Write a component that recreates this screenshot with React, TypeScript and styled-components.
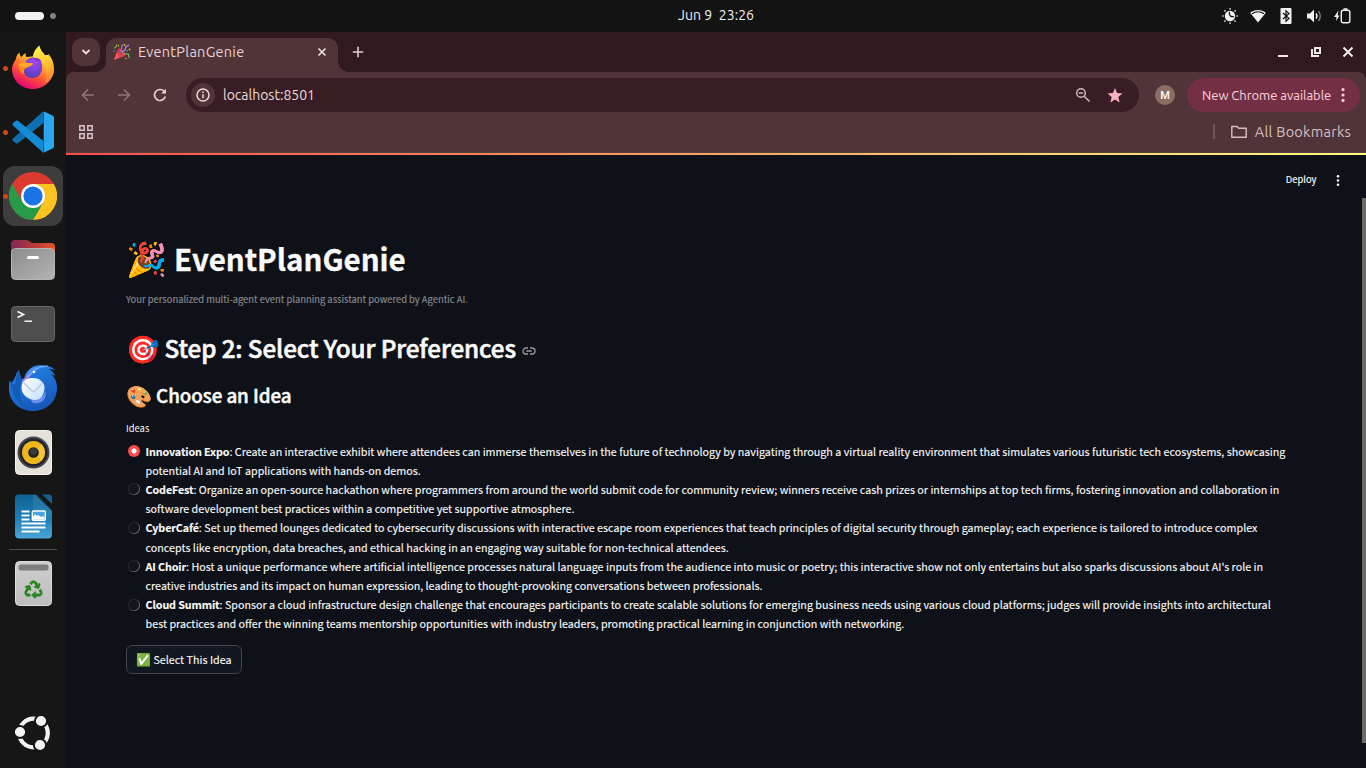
import React from "react";
import styled, { createGlobalStyle } from "styled-components";
import { FaRecycle } from "react-icons/fa";

const Global = createGlobalStyle`
  * { box-sizing: border-box; }
  body { margin: 0; background: #0e1117; overflow: hidden; }
  h1, h2, h3, p { margin: 0; }
  button { font: inherit; color: inherit; border: 0; background: none; padding: 0; }
`;

const uiFont = `"Ubuntu", "Noto Sans", sans-serif`;
const pageFont = `"Source Sans Pro", "Noto Sans CJK SC", "Noto Color Emoji", sans-serif`;

const Desktop = styled.div`
  width: 1366px; height: 768px; overflow: hidden;
  display: flex; flex-direction: column;
  background: #0e1117; font-family: ${uiFont};
`;
const TopBar = styled.header`
  height: 32px; flex: none; background: #131313; color: #f2f2f2;
  display: grid; grid-template-columns: 663px auto 1fr; align-items: center;
  padding: 0 15px 0 15px;
`;
const Workspaces = styled.div`display: flex; align-items: center; gap: 6px;`;
const Pill = styled.span<{ $active?: boolean }>`
  width: ${p => (p.$active ? 29 : 6)}px; height: ${p => (p.$active ? 8 : 6)}px;
  border-radius: 4px; background: ${p => (p.$active ? "#f2f2f2" : "#828282")};
`;
const Clock = styled.div`
  font-size: 14px; white-space: pre; line-height: 30px; height: 32px; letter-spacing: 0.05px;
`;
const Tray = styled.div`display: flex; justify-content: flex-end; align-items: center; gap: 12px;`;

const Body = styled.div`display: flex; flex: 1; min-height: 0;`;
const Dock = styled.nav`
  width: 66px; flex: none; background: #161616; padding: 4px 3px 3px;
  display: flex; flex-direction: column; align-items: stretch;
`;
const Slot = styled.div<{ $active?: boolean }>`
  height: 60px; margin: 2px 0; flex: none; position: relative; border-radius: 12px;
  display: flex; align-items: center; justify-content: center;
  background: ${p => (p.$active ? "#3d3d3d" : "transparent")};
`;
const RunDot = styled.i`
  position: absolute; left: 0; top: 27.5px; width: 5px; height: 5px; border-radius: 50%; background: #d34615;
`;
const DockLine = styled.div`height: 1px; margin: 1px 6px 1px; background: #4c4c4c;`;
const DockSpace = styled.div`flex: 1;`;

const Browser = styled.section`flex: 1; display: flex; flex-direction: column; min-width: 0; background: #30191f;`;
const TabStrip = styled.div`
  height: 40px; flex: none; padding: 6px 0 0 6px; display: flex; color: #e9d6da;
`;
const TabSearch = styled.button`
  width: 28px; height: 28px; border-radius: 10px; background: #503438;
  display: flex; align-items: center; justify-content: center;
`;
const Tab = styled.div`
  position: relative; margin-left: 6px; width: 232px; height: 34px; background: #503438;
  border-radius: 10px 10px 0 0; display: flex; align-items: center; padding: 0 11px 6px 7px;
  &::before, &::after {
    content: ""; position: absolute; bottom: 0; width: 10px; height: 10px;
  }
  &::before { left: -10px; background: radial-gradient(circle at 0 0, transparent 9.5px, #503438 10px); }
  &::after { right: -10px; background: radial-gradient(circle at 100% 0, transparent 9.5px, #503438 10px); }
`;
const TabTitle = styled.span`
  margin-left: 7px; flex: 1; font-size: 14.5px; line-height: 18px; letter-spacing: 0.27px; color: #e6d3d6;
`;
const NewTab = styled.button`width: 20px; height: 28px; margin-left: 10px; display: flex; align-items: center; justify-content: center;`;
const WindowButtons = styled.div`margin-left: auto; height: 28px; display: flex; align-items: center; gap: 20.5px; padding-right: 12px;`;

const Toolbar = styled.div`
  height: 46px; flex: none; background: #503438; border-radius: 8px 8px 0 0;
  display: flex; align-items: center; padding: 0 6px 0 14px;
`;
const NavButtons = styled.div`display: flex; gap: 20px; width: 106px;`;
const Omnibox = styled.div`
  width: 953px; height: 34px; border-radius: 17px; background: #381e24;
  display: flex; align-items: center; padding: 0 16px 0 5px;
`;
const SiteInfo = styled.span`
  width: 24px; height: 24px; border-radius: 50%; background: #503438;
  display: flex; align-items: center; justify-content: center;
`;
const Url = styled.span`margin-left: 8px; flex: 1; color: #eddadd; font-size: 14px; line-height: 20px;`;
const OmniActions = styled.div`display: flex; align-items: center; gap: 16px;`;
const Avatar = styled.span`
  width: 20px; height: 20px; border-radius: 50%; margin-left: 16px; background: #8c6e63; color: #fff;
  font: 500 11px/21px Roboto, sans-serif; text-align: center;
`;
const UpdateChip = styled.button`
  margin-left: 12px; width: 173px; height: 34px; border-radius: 17px; background: #732f44; color: #ffd2da;
  display: flex; align-items: center; justify-content: space-between; padding: 0 15px 0 15px;
  font-size: 13px; letter-spacing: -0.04px; white-space: nowrap;
`;
const Bookmarks = styled.div`
  height: 35px; flex: none; background: #503438; padding: 0 15px 7px 13px;
  border-bottom: 1px solid #51413f;
  display: flex; align-items: center; color: #d6bfc3;
`;
const BookmarkDivider = styled.span`margin-left: auto; width: 1.5px; height: 15px; background: #70545a; margin-right: 16px;`;
const BookmarkText = styled.span`font-size: 14.5px; line-height: 20px; margin-left: 8px; letter-spacing: 0.25px; white-space: nowrap;`;

const Decoration = styled.div`height: 2px; flex: none; background: linear-gradient(90deg, #ff4b4b, #fffd80);`;
const Page = styled.div`flex: 1; background: #0e1117; color: #fafafa; font-family: ${pageFont}; display: flex; min-height: 0;`;
const PageColumn = styled.div`flex: 1; display: flex; flex-direction: column;`;
const PageHeader = styled.div`
  height: 50px; display: flex; align-items: center; justify-content: flex-end; gap: 19px; padding-right: 22.5px;
`;
const Deploy = styled.button`
  font-size: 9.4px; line-height: 14px; margin-top: -2px; font-weight: 400; -webkit-text-stroke: 0.15px currentColor;
`;
const Main = styled.main`padding: 33px 0 0 60px; display: flex; flex-direction: column; align-items: flex-start;`;
const Title = styled.h1`
  height: 40px; line-height: 40px; font-size: 29.5px; font-weight: 700; display: flex; align-items: center; white-space: nowrap;
  -webkit-text-stroke: 0.3px currentColor;
`;
const Emoji = styled.span<{ $size: number; $gap: number; $drop: number }>`
  font-family: "Noto Color Emoji", sans-serif; font-size: ${p => p.$size}px; font-weight: 400;
  padding-top: ${p => p.$drop * 2}px; margin-right: ${p => p.$gap}px;
`;
const Caption = styled.p`
  margin-top: 13px; height: 17px; font-size: 9.4px; line-height: 17px; color: #83858a; white-space: nowrap;
  letter-spacing: 0.01px; -webkit-text-stroke: 0.2px currentColor;
`;
const StepHeading = styled.h2`
  margin-top: 21px; height: 38px; font-size: 24.2px; line-height: 38px; font-weight: 500;
  letter-spacing: -0.09px; -webkit-text-stroke: 0.6px currentColor;
  display: flex; align-items: center; white-space: nowrap;
`;
const Anchor = styled.span`margin: 6px 0 0 6px; display: flex;`;
const SubHeading = styled.h3`
  margin-top: 14px; height: 28px; font-size: 18.8px; line-height: 28px; font-weight: 500;
  letter-spacing: -0.06px; -webkit-text-stroke: 0.5px currentColor;
  display: flex; align-items: center; white-space: nowrap;
`;
const Label = styled.p`margin-top: 11px; height: 16px; font-size: 9.4px; line-height: 16px;`;
const Options = styled.div`margin-top: 5.7px; display: flex; flex-direction: column;`;
const Option = styled.label`display: flex; height: 38.4px; padding-left: 2px;`;
const Radio = styled.span<{ $on?: boolean }>`
  flex: none; width: 12px; height: 12px; margin: 3.3px 5.6px 0 0; border-radius: 50%;
  background: ${p => (p.$on ? "radial-gradient(circle, #fff 2.3px, #ff4b4b 2.9px)" : "#14161d")};
  box-shadow: ${p => (p.$on ? "none" : "inset -0.8px -0.6px 0.6px #6b6d74, inset 0 0 0 0.6px #30323a")};
`;
const Lines = styled.span`
  font-size: 10.74px; line-height: 19.2px; white-space: nowrap; -webkit-text-stroke: 0.12px currentColor;
`;
const Line = styled.span`display: block;`;
const Name = styled.b`letter-spacing: -0.12px;`;
const SelectButton = styled.button`
  margin-top: 11.3px; height: 29px; width: 116px; border: 1px solid #41444c; border-radius: 6px; background: #131720;
  display: flex; align-items: center; justify-content: center; font-size: 10.74px; white-space: nowrap;
  -webkit-text-stroke: 0.12px currentColor;
`;
const ScrollThumb = styled.div`width: 4px; height: 545px; margin-top: 43px; background: #6b6b6b;`;

const Dots = ({ h, r, color }: { h: number; r: number; color: string }) => (
  <svg width="4" height={h} viewBox={`0 0 4 ${h}`} fill={color}>
    <circle cx="2" cy={r} r={r} /><circle cx="2" cy={h / 2} r={r} /><circle cx="2" cy={h - r} r={r} />
  </svg>
);

const Firefox = () => (
  <svg width="42" height="46" viewBox="0 0 42 46">
    <defs>
      <linearGradient id="ffa" x1=".8" y1=".05" x2=".25" y2=".95">
        <stop offset="0" stopColor="#fff44f" /><stop offset=".3" stopColor="#ffb02e" />
        <stop offset=".6" stopColor="#ff5634" /><stop offset="1" stopColor="#e6007a" />
      </linearGradient>
      <linearGradient id="ffb" x1=".5" y1="0" x2=".8" y2="1">
        <stop offset="0" stopColor="#fff14f" /><stop offset=".5" stopColor="#ffc22e" /><stop offset="1" stopColor="#ff7a2e" />
      </linearGradient>
      <radialGradient id="ffc" cx=".6" cy=".2" r=".9">
        <stop offset="0" stopColor="#a546ff" /><stop offset="1" stopColor="#4b3fae" />
      </radialGradient>
    </defs>
    <path d="M4 14C4 11 6 8.500 7.500 7.500C7.500 10 8.500 11 9.500 12C11 10 12 9 14 8.300C13.500 9.500 13.500 11 14.500 12L36 10C42 18 43 26 40 32C36 40 29 44 21 44C9 44 0 35 0 24C0 20 2 17 4 14Z" fill="url(#ffa)" />
    <path d="M21 14C20 9 24 3 27.500 .5C28 6 34 10 36 14C36.500 12 36.500 10 36 8.500C41 14 42 20 42 24C42 30 39 36 33 38C36 31 36 22 30 17C27 14.500 24 14 21 14Z" fill="url(#ffb)" />
    <path d="M12 21C13 15 17 12.500 22 12.500C28 13 31 18 30 24C29 31 24 33 20 33C14 33 10 28 12 21Z" fill="url(#ffc)" />
    <path d="M6 20C10 15 16 18 21 18.500C20 21.500 17 21.500 14 23C12 24 11.500 26 12.500 29C7 28 7 23 6 20Z" fill="#ff8b22" />
    <path d="M7 19C11 16 16 18 21 18.500C20 21 17 21.500 14 22.500C11 22.500 8 21.500 7 19Z" fill="#ffa62b" />
    <path d="M21 13.500C25 12 28.500 14 29.500 16.500C27.500 15.500 26.500 16 25.500 16.500Z" fill="#7c3bd0" />
  </svg>
);
const VSCode = () => (
  <svg width="42" height="42" viewBox="0 0 42 42">
    <path d="M31 .5L1 27.600Q0 28.700 1 30L4 32.300Q5 33 6.200 32.100L31.500 12Z" fill="#0f6fb0" />
    <path d="M31 41.500L1 14.400Q0 13.200 1 12L4 9.700Q5 9 6.200 9.900L31.500 30Z" fill="#138bd6" />
    <path d="M31 41.500C32 41.600 32.500 41.300 33 41L40.600 37.500Q42 36.800 42 35.200V6.800Q42 5.200 40.600 4.500L33 1C32 .5 31 .6 30.300 1.300C31.200 .9 31.700 1.600 31.700 2.700V39.300C31.700 40.500 31.200 41.200 30.300 40.800Z" fill="#2aa5ee" />
  </svg>
);
const Chrome = () => (
  <svg width="48" height="48" viewBox="0 0 48 48">
    <circle cx="24" cy="24" r="24" fill="#db3b2f" />
    <path d="M24 12H44.800A24 24 0 0 1 24 48L34.400 30Z" fill="#fcc420" />
    <path d="M3.200 12A24 24 0 0 0 24 48L34.400 30L24 34L13.600 30Z" fill="#269c49" />
    <circle cx="24" cy="24" r="12" fill="#fff" /><circle cx="24" cy="24" r="9.600" fill="#1b73e8" />
  </svg>
);
const Files = () => (
  <svg width="44" height="40" viewBox="0 0 44 40">
    <defs>
      <linearGradient id="fia"><stop offset="0" stopColor="#7d2756" /><stop offset=".5" stopColor="#b23a3d" /><stop offset="1" stopColor="#ea5420" /></linearGradient>
      <linearGradient id="fib" x2="1" y2="1"><stop offset="0" stopColor="#8c8c8c" /><stop offset="1" stopColor="#b4b4b4" /></linearGradient>
    </defs>
    <path d="M0 14V4Q0 0 4 0H15Q18 0 19 1.500T23 3H40Q44 3 44 7V14Z" fill="url(#fia)" />
    <rect x=".5" y="8.500" width="43" height="31" rx="4" fill="url(#fib)" stroke="#b5b5b5" />
    <rect x="16" y="16" width="12" height="3" rx="1.500" fill="#fff" />
  </svg>
);
const Terminal = () => (
  <svg width="44" height="36" viewBox="0 0 44 36">
    <rect x=".5" y=".5" width="43" height="35" rx="4" fill="#4d4d4d" stroke="#656565" />
    <path d="M6.500 5.500L12.500 8.500L6.500 11.500" fill="none" stroke="#f5f5f5" strokeWidth="1.700" />
    <path d="M13.500 15.200H21" stroke="#f5f5f5" strokeWidth="1.500" />
  </svg>
);
const Thunderbird = () => (
  <svg width="48" height="47" viewBox="0 0 48 47">
    <defs>
      <linearGradient id="tba" x1=".2" y1="0" x2=".6" y2="1"><stop offset="0" stopColor="#2585e8" /><stop offset="1" stopColor="#1556b8" /></linearGradient>
      <linearGradient id="tbb" x2="1" y2="1"><stop offset="0" stopColor="#fff" /><stop offset="1" stopColor="#bfe0ff" /></linearGradient>
    </defs>
    <path d="M1 15C2 20 4 17 7 10C7 8 9 6 10 5C10 8 12 11 12 14C15 14 17 13 18 11C16 11 16 12 15 13C18 4 24 0 32 0C39 0 45 3 46 5C44 4.500 42 4 40 4C43 6 46 9 46 11L42 9C46 13 48 17 48 23C48 36 38 46 24 46C10 46 0 36 0 24C0 20 0 17 1 15Z" fill="url(#tba)" />
    <path d="M16 13C18 5 24 1 31 1C35 1 38 1.500 40 2C30 2 25 6 23 10C21 10 18 11 16 13Z" fill="#4b8ff0" />
    <path d="M15.500 13C17 11 20 9 22 10C21 13 17 15 14 19C12 20 13 15 15.500 13Z" fill="#a886ee" />
    <path d="M20 11C24 4 31 1 39 1" fill="none" stroke="#7db1ff" strokeWidth="1.200" />
    <circle cx="25" cy="7" r="1.300" fill="#fff" />
    <path d="M1 17C3 27 6 37 18 43C9 32 10 26 13 15C12 12 10 9 10 5C7 9 7 15 6 20Z" fill="#115db7" />
    <path d="M12.500 22C13 14 20 13 24 13C31 13 36 18 35.500 23C35 31 31 35 28 36C20 35 12 30 12.500 22Z" fill="url(#tbb)" />
    <path d="M14.500 17.500L23 26Q24.500 27.500 26 26L34 17.500" fill="none" stroke="#bdcce0" strokeWidth="1.500" />
    <path d="M21 34C29 37 36 32 36 25C39 33 33 40 24 38Z" fill="#6d8df0" />
  </svg>
);
const Speaker = () => (
  <svg width="37" height="45" viewBox="0 0 37 45">
    <rect x=".5" y=".5" width="36" height="44" rx="4" fill="#e6e1d8" stroke="#f7f4ef" />
    <circle cx="18.500" cy="22.500" r="16" fill="#45454c" /><circle cx="18.500" cy="22.500" r="14" fill="#22222e" />
    <circle cx="18.500" cy="22.500" r="11.500" fill="#edb71c" />
    <path d="M18.500 22.500L26.500 14.500A11.500 11.500 0 0 1 26.500 30.500Z" fill="#fbd04c" opacity=".55" />
    <circle cx="18.500" cy="22.500" r="5.300" fill="#222" /><circle cx="18.500" cy="21.500" r="3.500" fill="#393939" />
  </svg>
);
const Writer = () => (
  <svg width="37" height="45" viewBox="0 0 37 45">
    <defs><linearGradient id="wra" x2="0" y2="1"><stop offset="0" stopColor="#116294" /><stop offset=".5" stopColor="#1a7bb4" /><stop offset="1" stopColor="#4ba6d5" /></linearGradient></defs>
    <path d="M4 .5H20Q22 .5 24 2.500L35 13.500Q37 15.500 37 18V40Q37 44.500 33 44.500H4Q0 44.500 0 40V4.500Q0 .5 4 .5Z" fill="url(#wra)" />
    <path d="M27 .5H34Q37 .5 37 4V10Z" fill="#17618f" />
    <path d="M22.500 1L37 15.500" stroke="#131a20" strokeWidth="2.200" />
    <path d="M18 .5H20Q22 .5 24 2.500L35 13.500Q37 15.500 37 18V23H18Z" fill="#fff" opacity=".08" />
    <path d="M6.500 17.500H14.500M6.500 21.500H14.500M6.500 25.500H14.500M6.500 29.500H30.500M6.500 33.500H30.500M6.500 37.500H24.500" stroke="#fff" strokeWidth="2" />
    <rect x="17.300" y="17" width="13" height="9.200" rx="1" fill="#4aa3e0" stroke="#fff" strokeWidth="1.400" />
    <path d="M18 25.500V23L20 20L22 22L23 21L26 23L28 22L29.600 24V25.500Z" fill="#fff" />
  </svg>
);
const Trash = () => (
  <svg width="37" height="45" viewBox="0 0 37 45">
    <defs><linearGradient id="tra" x2="0" y2="1"><stop offset="0" stopColor="#cecece" /><stop offset="1" stopColor="#bdbdbd" /></linearGradient></defs>
    <rect x=".5" y=".5" width="36" height="44" rx="4" fill="url(#tra)" stroke="#dcdcdc" />
    <rect x="3.500" y="3.500" width="30" height="6" rx="2.500" fill="#7e7e7e" />
    <FaRecycle x="9.500" y="19.500" size={18} color="#26851f" stroke="#26851f" strokeWidth={18} />
  </svg>
);
const Ubuntu = () => (
  <svg width="36" height="36" viewBox="0 0 36 36">
    <circle cx="18.500" cy="18" r="14.300" fill="none" stroke="#f2f2f2" strokeWidth="4.200" />
    <g fill="#f2f2f2" stroke="#161616" strokeWidth="2"><circle cx="5" cy="17" r="6.100" /><circle cx="26" cy="6" r="6.100" /><circle cx="25" cy="30" r="6.100" /></g>
  </svg>
);
const Popper = () => (
  <svg width="18" height="18" viewBox="0 0 18 18">
    <path d="M1 17L5 6L12 13Z" fill="#e5404d" /><path d="M1 17L3.800 9.500L6 14.500Z" fill="#f45b64" />
    <ellipse cx="8.700" cy="9.300" rx="5" ry="2.200" transform="rotate(45 8.700 9.300)" fill="#d4364a" />
    <g fill="none" strokeWidth="1.300" strokeLinecap="round">
      <path d="M7.500 8.500C10 6 7.500 4 9.500 1.800" stroke="#8b74dc" /><path d="M9.500 9C11 6.500 13 7.500 12.500 5C12.300 3.500 15 3.500 15.500 2" stroke="#a88ae6" />
      <path d="M10.500 11C12 9.500 13 11.500 14.500 11C16.500 10.500 15 13.500 16.500 14.500" stroke="#63b84a" /><path d="M2 5C1.500 3.500 4.500 4.500 3.500 2" stroke="#63b84a" />
    </g>
    <g fill="#eebb36"><circle cx="5.500" cy="2.800" r=".8" /><circle cx="11.500" cy="2" r=".9" /><circle cx="16.500" cy="6.500" r=".9" /><circle cx="13" cy="15.500" r=".8" /></g>
    <g fill="#57a8dd"><circle cx="14" cy="7.800" r=".8" /><circle cx="1" cy="8" r=".7" /></g>
  </svg>
);

const ideas: { name: string; first: string; second: string }[] = [
  { name: "Innovation Expo", first: ": Create an interactive exhibit where attendees can immerse themselves in the future of technology by navigating through a virtual reality environment that simulates various futuristic tech ecosystems, showcasing", second: "potential AI and IoT applications with hands-on demos." },
  { name: "CodeFest", first: ": Organize an open-source hackathon where programmers from around the world submit code for community review; winners receive cash prizes or internships at top tech firms, fostering innovation and collaboration in", second: "software development best practices within a competitive yet supportive atmosphere." },
  { name: "CyberCafé", first: ": Set up themed lounges dedicated to cybersecurity discussions with interactive escape room experiences that teach principles of digital security through gameplay; each experience is tailored to introduce complex", second: "concepts like encryption, data breaches, and ethical hacking in an engaging way suitable for non-technical attendees." },
  { name: "AI Choir", first: ": Host a unique performance where artificial intelligence processes natural language inputs from the audience into music or poetry; this interactive show not only entertains but also sparks discussions about AI's role in", second: "creative industries and its impact on human expression, leading to thought-provoking conversations between professionals." },
  { name: "Cloud Summit", first: ": Sponsor a cloud infrastructure design challenge that encourages participants to create scalable solutions for emerging business needs using various cloud platforms; judges will provide insights into architectural", second: "best practices and offer the winning teams mentorship opportunities with industry leaders, promoting practical learning in conjunction with networking." },
];

const SystemTray = () => (
  <Tray>
    <svg width="16" height="16" viewBox="0 0 16 16">
      <g stroke="#bdbdbd" strokeWidth="1.500"><path d="M8 0V1.800M8 14.200V16M0 8H1.800M14.200 8H16M2.300 2.300L3.600 3.600M12.400 12.400L13.700 13.700M2.300 13.700L3.600 12.400M12.400 3.600L13.700 2.300" /></g>
      <circle cx="8" cy="8" r="5.200" fill="#f2f2f2" /><path d="M7 4.300A4 4 0 0 0 11.800 9A4.200 4.200 0 0 1 4.200 9.300A5 5 0 0 0 7 4.300Z" fill="#131313" opacity="0" />
      <path d="M7.600 4A3.200 3.200 0 0 0 11.900 8.300" fill="none" stroke="#131313" strokeWidth="1.300" />
    </svg>
    <svg width="16" height="16" viewBox="0 0 16 16"><path d="M8 14.500L.8 5.500Q0 4.600 1 4Q8 -.2 15 4Q16 4.600 15.200 5.500Z" fill="#f2f2f2" /><path d="M2 5.700Q8 1.800 14 5.700" fill="none" stroke="#131313" strokeWidth="1.200" /></svg>
    <svg width="16" height="16" viewBox="0 0 16 16"><rect x="2.500" width="11" height="16" rx="1" fill="#f2f2f2" /><path d="M5 5L11 10.500L8 13.200V2.800L11 5.500L5 11" fill="none" stroke="#131313" strokeWidth="1.200" /></svg>
    <svg width="16" height="16" viewBox="0 0 16 16"><path d="M1 5.500H4L8 1.500V14.500L4 10.500H1Z" fill="#f2f2f2" /><path d="M10 5.500Q12 8 10 10.500" fill="none" stroke="#f2f2f2" strokeWidth="1.400" /><path d="M12.500 3Q16 8 12.500 13" fill="none" stroke="#8a8a8a" strokeWidth="1.300" /></svg>
    <svg width="17" height="16" viewBox="0 0 17 16"><path d="M4.500 2.500L0 9H2.500L2 13L5.500 7.500H3.600Z" fill="#f2f2f2" /><rect x="7.300" y="2.300" width="8.500" height="12.500" rx="2" fill="none" stroke="#f2f2f2" strokeWidth="1.400" /><path d="M9.500 1H13.500" stroke="#f2f2f2" strokeWidth="1.500" /></svg>
  </Tray>
);

export default function App() {
  const pink = "#e4cdd1";
  return (
    <Desktop>
      <Global />
      <TopBar>
        <Workspaces><Pill $active /><Pill /></Workspaces>
        <Clock>{"Jun 9  23:26"}</Clock>
        <SystemTray />
      </TopBar>
      <Body>
        <Dock>
          <Slot><RunDot /><Firefox /></Slot>
          <Slot><RunDot /><VSCode /></Slot>
          <Slot $active><RunDot /><Chrome /></Slot>
          <Slot><Files /></Slot>
          <Slot><Terminal /></Slot>
          <Slot><Thunderbird /></Slot>
          <Slot><Speaker /></Slot>
          <Slot><Writer /></Slot>
          <DockLine />
          <Slot><Trash /></Slot>
          <DockSpace />
          <Slot><Ubuntu /></Slot>
        </Dock>
        <Browser>
          <TabStrip>
            <TabSearch><svg width="10" height="8" viewBox="0 0 10 8"><path d="M1.500 2L5 5.500L8.500 2" fill="none" stroke="#f0dfe2" strokeWidth="1.800" /></svg></TabSearch>
            <Tab>
              <Popper />
              <TabTitle>EventPlanGenie</TabTitle>
              <svg width="10" height="10" viewBox="0 0 10 10"><path d="M1.500 1.500L8.500 8.500M8.500 1.500L1.500 8.500" stroke="#f0dfe2" strokeWidth="1.600" /></svg>
            </Tab>
            <NewTab><svg width="12" height="12" viewBox="0 0 12 12"><path d="M6 .8V11.200M.8 6H11.200" stroke={pink} strokeWidth="1.600" /></svg></NewTab>
            <WindowButtons>
              <svg width="12" height="12" viewBox="0 0 12 12"><path d="M1 10H11" stroke="#f0e9ea" strokeWidth="2" /></svg>
              <svg width="12" height="12" viewBox="0 0 12 12"><path d="M5 2H10V7H5ZM2 3V10H9" fill="none" stroke="#f0e9ea" strokeWidth="2" /></svg>
              <svg width="12" height="12" viewBox="0 0 12 12"><path d="M1.500 1.500L10.500 10.500M10.500 1.500L1.500 10.500" stroke="#f0e9ea" strokeWidth="2" /></svg>
            </WindowButtons>
          </TabStrip>
          <Toolbar>
            <NavButtons>
              <svg width="16" height="16" viewBox="0 0 16 16"><path d="M14 8H3M8 2.500L2.500 8L8 13.500" fill="none" stroke="#8f7378" strokeWidth="1.600" /></svg>
              <svg width="16" height="16" viewBox="0 0 16 16"><path d="M2 8H13M8 2.500L13.500 8L8 13.500" fill="none" stroke="#8f7378" strokeWidth="1.600" /></svg>
              <svg width="16" height="16" viewBox="0 0 16 16"><path d="M13.300 9.500A5.500 5.500 0 1 1 12 4.200L13.500 5.800" fill="none" stroke="#f2c9d1" strokeWidth="1.700" /><path d="M14 1.800V6.600H9.200Z" fill="#f2c9d1" /></svg>
            </NavButtons>
            <Omnibox>
              <SiteInfo><svg width="14" height="14" viewBox="0 0 14 14"><circle cx="7" cy="7" r="6" fill="none" stroke="#ecd7da" strokeWidth="1.500" /><path d="M7 6.200V10.300M7 3.600V5" stroke="#ecd7da" strokeWidth="1.500" /></svg></SiteInfo>
              <Url>localhost:8501</Url>
              <OmniActions>
                <svg width="16" height="16" viewBox="0 0 16 16"><circle cx="6" cy="6" r="4.300" fill="none" stroke="#cdb5b9" strokeWidth="1.500" /><path d="M3.800 6H8.200M9.200 9.200L14.500 14.500" stroke="#cdb5b9" strokeWidth="1.600" /></svg>
                <svg width="16" height="16" viewBox="0 0 16 16"><path d="M8 1L10 6.100L15.500 6.500L11.300 10L12.600 15.400L8 12.500L3.400 15.400L4.700 10L.5 6.500L6 6.100Z" fill="#ffb1c1" /></svg>
              </OmniActions>
            </Omnibox>
            <Avatar>M</Avatar>
            <UpdateChip><span>New Chrome available</span><Dots h={14} r={1.6} color="#ffd2da" /></UpdateChip>
          </Toolbar>
          <Bookmarks>
            <svg width="14" height="14" viewBox="0 0 14 14"><path d="M.8 .8H5.200V5.200H.8ZM8.800 .8H13.200V5.200H8.800ZM.8 8.800H5.200V13.200H.8ZM8.800 8.800H13.200V13.200H8.800Z" fill="none" stroke="#d9c2c6" strokeWidth="1.500" /></svg>
            <BookmarkDivider />
            <svg width="16" height="14" viewBox="0 0 16 14"><path d="M.8 12.200V1.500H6L7.700 3.300H15.200V12.200Z" fill="none" stroke="#d6bfc3" strokeWidth="1.400" strokeLinejoin="round" /></svg>
            <BookmarkText>All Bookmarks</BookmarkText>
          </Bookmarks>
          <Decoration />
          <Page>
            <PageColumn>
              <PageHeader><Deploy>Deploy</Deploy><Dots h={11} r={1.3} color="#fafafa" /></PageHeader>
              <Main>
                <Title><Emoji $size={33} $gap={7} $drop={2}>🎉</Emoji>EventPlanGenie</Title>
                <Caption>Your personalized multi-agent event planning assistant powered by Agentic AI.</Caption>
                <StepHeading>
                  <Emoji $size={27} $gap={5} $drop={1.5}>🎯</Emoji>Step 2: Select Your Preferences
                  <Anchor><svg width="14" height="8" viewBox="0 0 14 8"><path d="M6 1H4A3 3 0 0 0 4 7H6M8 1H10A3 3 0 0 1 10 7H8M4.200 4H9.800" fill="none" stroke="#989a9f" strokeWidth="1.300" /></svg></Anchor>
                </StepHeading>
                <SubHeading><Emoji $size={21} $gap={4} $drop={1.5}>🎨</Emoji>Choose an Idea</SubHeading>
                <Label>Ideas</Label>
                <Options>
                  {ideas.map((idea, i) => (
                    <Option key={idea.name}>
                      <Radio $on={i === 0} />
                      <Lines><Line><Name>{idea.name}</Name>{idea.first}</Line><Line>{idea.second}</Line></Lines>
                    </Option>
                  ))}
                </Options>
                <SelectButton><Emoji $size={12} $gap={2} $drop={0.5}>✅</Emoji>Select This Idea</SelectButton>
              </Main>
            </PageColumn>
            <ScrollThumb />
          </Page>
        </Browser>
      </Body>
    </Desktop>
  );
}
